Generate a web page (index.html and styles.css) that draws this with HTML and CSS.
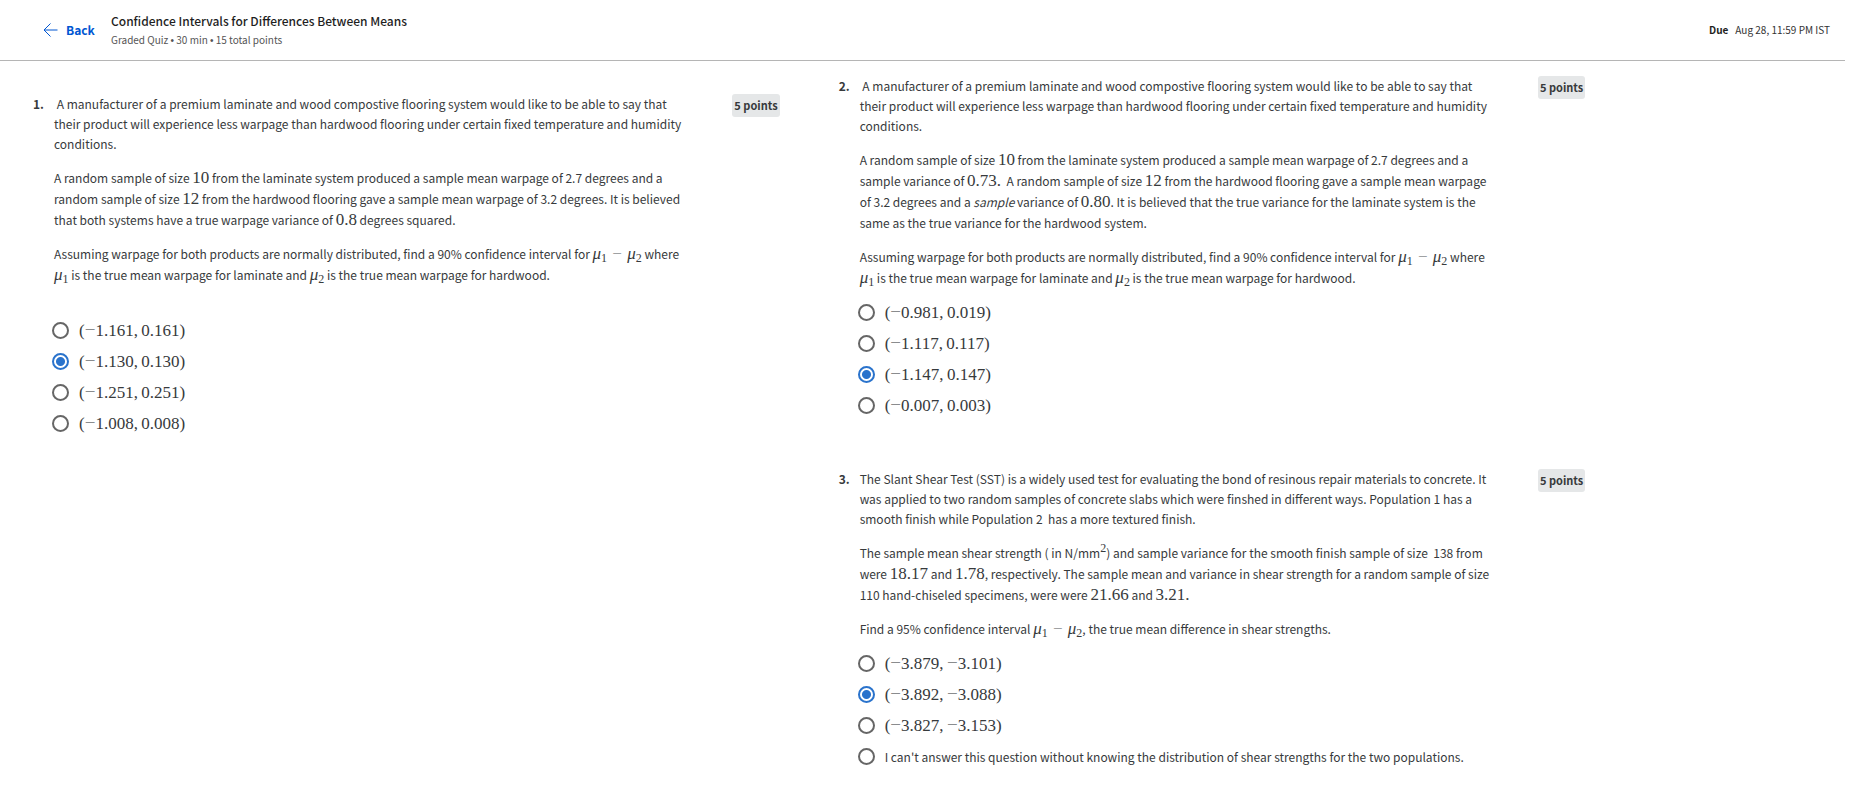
FILE: index.html
```html
<!DOCTYPE html>
<html lang="en">
<head>
<meta charset="utf-8">
<title>Confidence Intervals for Differences Between Means</title>
<link rel="stylesheet" href="styles.css">
</head>
<body>
<header class="topbar">
  <a class="back" href="#">
    <svg class="back-icon" width="15" height="14" viewBox="0 0 15 14" aria-hidden="true"><path d="M7.500 .5 1 7l6.500 6.500M1 7h13.500" fill="none" stroke="currentColor"/></svg>
    <span>Back</span>
  </a>
  <div class="heading">
    <h1 class="title">Confidence Intervals for Differences Between Means</h1>
    <p class="meta">Graded Quiz <span class="dot">•</span> 30 min <span class="dot">•</span> 15 total points</p>
  </div>
  <p class="due"><b>Due</b><span>Aug 28, 11:59 PM IST</span></p>
</header>
<main class="quiz">
  <div class="column column-first">
    <section class="question">
      <span class="number">1.</span>
      <div class="body">
        <p class="intro">&nbsp;A manufacturer of a premium laminate and wood compostive flooring system would like to be able to say that their product will experience less warpage than hardwood flooring under certain fixed temperature and humidity conditions.</p>
        <p>A random sample of size <span class="math">10</span> from the laminate system produced a sample mean warpage of 2.7 degrees and a random sample of size <span class="math">12</span> from the hardwood flooring gave a sample mean warpage of 3.2 degrees. It is believed that both systems have a true warpage variance of <span class="math">0.8</span> degrees squared.</p>
        <p>Assuming warpage for both products are normally distributed, find a 90% confidence interval for <span class="math"><i>μ</i><sub>1</sub> <span class="minus">−</span> <i>μ</i><sub>2</sub></span> where <span class="math"><i>μ</i><sub>1</sub></span> is the true mean warpage for laminate and <span class="math"><i>μ</i><sub>2</sub></span> is the true mean warpage for hardwood.</p>
        <div class="options options-spaced">
          <label class="option"><input type="radio" name="q1"><span class="math">(<span class="sign">−</span>1.161,&#8201;0.161)</span></label>
          <label class="option"><input type="radio" name="q1" checked><span class="math">(<span class="sign">−</span>1.130,&#8201;0.130)</span></label>
          <label class="option"><input type="radio" name="q1"><span class="math">(<span class="sign">−</span>1.251,&#8201;0.251)</span></label>
          <label class="option"><input type="radio" name="q1"><span class="math">(<span class="sign">−</span>1.008,&#8201;0.008)</span></label>
        </div>
      </div>
      <span class="points">5 points</span>
    </section>
  </div>
  <div class="column">
    <section class="question">
      <span class="number">2.</span>
      <div class="body">
        <p class="intro">&nbsp;A manufacturer of a premium laminate and wood compostive flooring system would like to be able to say that their product will experience less warpage than hardwood flooring under certain fixed temperature and humidity conditions.</p>
        <p>A random sample of size <span class="math">10</span> from the laminate system produced a sample mean warpage of 2.7 degrees and a sample variance of <span class="math">0.73.</span>&nbsp; A random sample of size <span class="math">12</span> from the hardwood flooring gave a sample mean warpage of 3.2 degrees and a <em>sample</em> variance of <span class="math">0.80</span>. It is believed that the true variance for the laminate system is the same as the true variance for the hardwood system.</p>
        <p>Assuming warpage for both products are normally distributed, find a 90% confidence interval for <span class="math"><i>μ</i><sub>1</sub> <span class="minus">−</span> <i>μ</i><sub>2</sub></span> where <span class="math"><i>μ</i><sub>1</sub></span> is the true mean warpage for laminate and <span class="math"><i>μ</i><sub>2</sub></span> is the true mean warpage for hardwood.</p>
        <div class="options">
          <label class="option"><input type="radio" name="q2"><span class="math">(<span class="sign">−</span>0.981,&#8201;0.019)</span></label>
          <label class="option"><input type="radio" name="q2"><span class="math">(<span class="sign">−</span>1.117,&#8201;0.117)</span></label>
          <label class="option"><input type="radio" name="q2" checked><span class="math">(<span class="sign">−</span>1.147,&#8201;0.147)</span></label>
          <label class="option"><input type="radio" name="q2"><span class="math">(<span class="sign">−</span>0.007,&#8201;0.003)</span></label>
        </div>
      </div>
      <span class="points">5 points</span>
    </section>
    <section class="question">
      <span class="number">3.</span>
      <div class="body">
        <p class="intro">The Slant Shear Test (SST) is a widely used test for evaluating the bond of resinous repair materials to concrete. It was applied to two random samples of concrete slabs which were finshed in different ways. Population 1 has a smooth finish while Population 2&nbsp; has a more textured finish.</p>
        <p>The sample mean shear strength ( in N/mm<span class="math"><sup>2</sup></span>) and sample variance for the smooth finish sample of size&nbsp; 138 from were <span class="math">18.17</span> and <span class="math">1.78</span>, respectively. The sample mean and variance in shear strength for a random sample of size 110 hand-chiseled specimens, were were <span class="math">21.66</span> and <span class="math">3.21.</span></p>
        <p>Find a 95% confidence interval <span class="math"><i>μ</i><sub>1</sub> <span class="minus">−</span> <i>μ</i><sub>2</sub></span>, the true mean difference in shear strengths.</p>
        <div class="options">
          <label class="option"><input type="radio" name="q3"><span class="math">(<span class="sign">−</span>3.879,&#8201;<span class="sign">−</span>3.101)</span></label>
          <label class="option"><input type="radio" name="q3" checked><span class="math">(<span class="sign">−</span>3.892,&#8201;<span class="sign">−</span>3.088)</span></label>
          <label class="option"><input type="radio" name="q3"><span class="math">(<span class="sign">−</span>3.827,&#8201;<span class="sign">−</span>3.153)</span></label>
          <label class="option"><input type="radio" name="q3"><span>I can't answer this question without knowing the distribution of shear strengths for the two populations.</span></label>
        </div>
      </div>
      <span class="points">5 points</span>
    </section>
  </div>
</main>
</body>
</html>
```

FILE: styles.css
```css
* { box-sizing: border-box; }

body {
  margin: 0;
  background: #fff;
  color: #373a3c;
  font: 12px/20px "Noto Sans CJK SC", "Noto Sans", sans-serif;
}

p, h1 { margin: 0; }

.topbar {
  display: flex;
  align-items: center;
  height: 61px;
  margin-right: 20px;
  padding: 0 15px 0 43px;
  border-bottom: 1px solid #b5b5b5;
}

.back {
  display: flex;
  align-items: center;
  gap: 8px;
  width: 68px;
  color: #0056d2;
  font-weight: 700;
  text-decoration: none;
}

.heading { flex: 1; }

.title {
  color: #1f1f1f;
  font-size: 12px;
  font-weight: 500;
  line-height: 20px;
}

.meta {
  color: #555;
  font-size: 10px;
  line-height: 17px;
}

.dot { font-family: "Liberation Sans", sans-serif; }

.due {
  display: flex;
  gap: 7px;
  color: #333;
  font-size: 10px;
}

.due b { color: #1f1f1f; }

.quiz {
  display: grid;
  grid-template-columns: 1fr 1fr;
  gap: 59px;
  padding: 15px 15% 20px 33px;
}

.column {
  display: flex;
  flex-direction: column;
  gap: 48px;
}

.column-first { padding-top: 18px; }

.question {
  display: flex;
  align-items: flex-start;
}

.number {
  flex: none;
  width: 21px;
  font-weight: 700;
}

.body {
  flex: 1;
  display: flex;
  flex-direction: column;
  gap: 13px;
  line-height: 21px;
}

.intro { line-height: 20px; }

.points {
  flex: none;
  margin-left: 44px;
  padding: 0 2px;
  border-radius: 3px;
  background: #e5e7e8;
  font-size: 11px;
  font-weight: 700;
  line-height: 23px;
}

.math {
  font-family: "Liberation Serif", serif;
  font-size: 17px;
  line-height: 1;
  white-space: nowrap;
}

.math sub,
.math sup {
  font-size: 12px;
  line-height: 1;
}

.math sub { vertical-align: -3px; }
.math sup { vertical-align: 6px; }

.minus { margin: 0 1px; color: #8a8c8e; }

.sign {
  color: #8a8c8e;
  font-size: 19px;
  line-height: 0;
}

.options {
  display: flex;
  flex-direction: column;
  margin-top: -4px;
}

.options-spaced { margin-top: 17px; }

.option {
  display: flex;
  align-items: center;
  gap: 10px;
  height: 31px;
  margin-left: -2px;
}

.option input {
  appearance: none;
  flex: none;
  width: 17px;
  height: 17px;
  margin: 0;
  border: 2px solid #666;
  border-radius: 50%;
  background: #fff;
}

.option input:checked {
  border-color: #2a73cc;
  background: radial-gradient(circle, #2a73cc 4px, #fff 5px);
}
```
